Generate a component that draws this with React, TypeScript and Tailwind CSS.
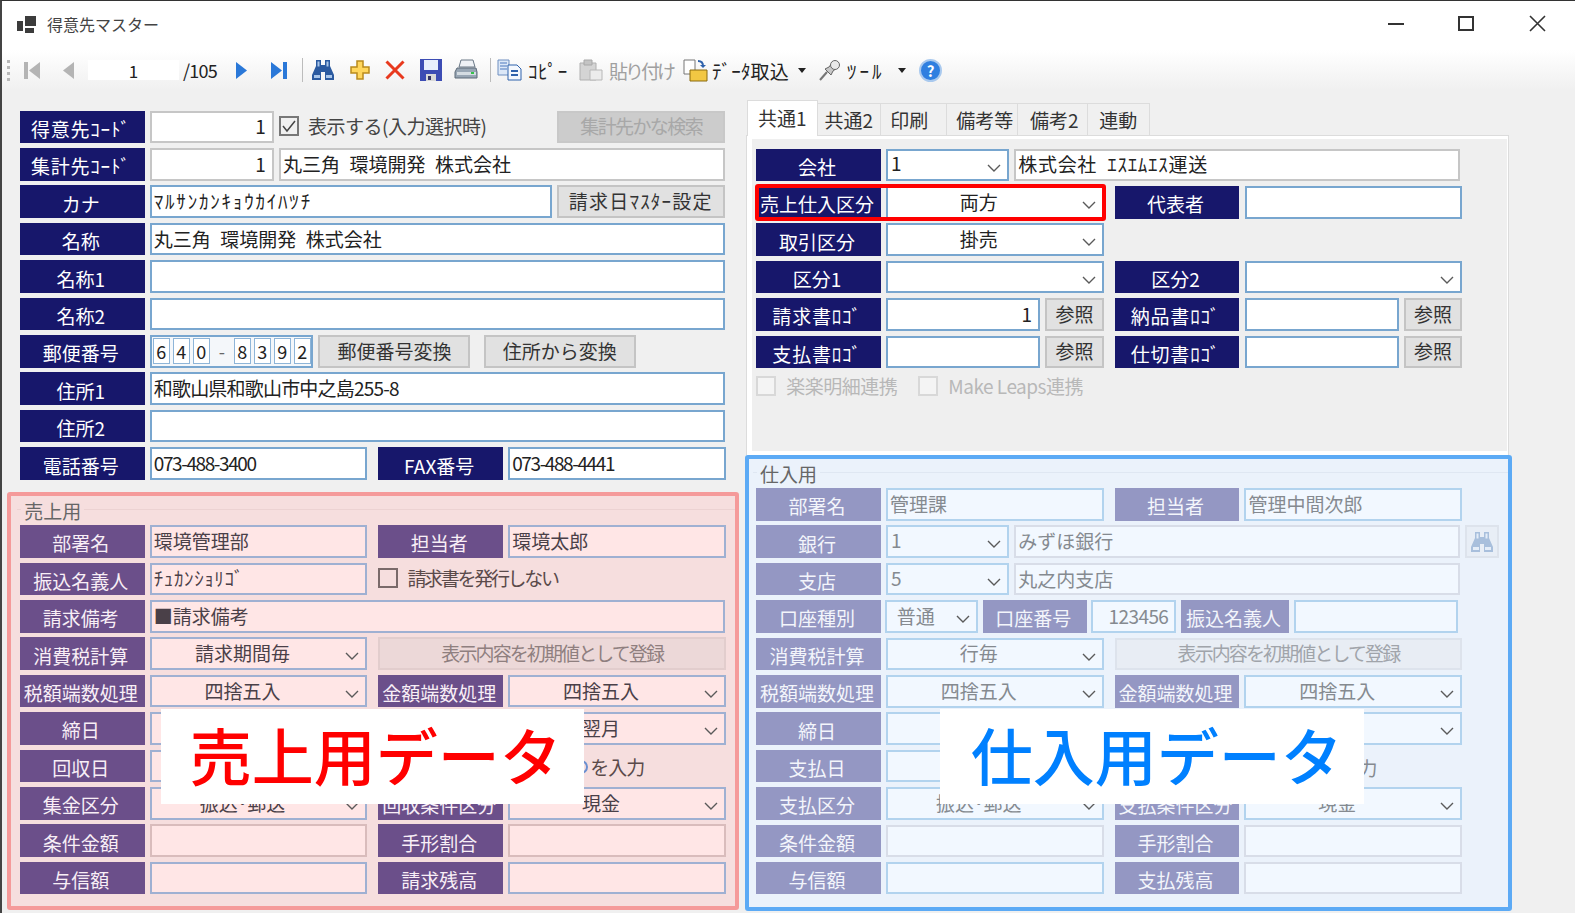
import React from "react";

type V = "main" | "sale" | "buy";

const labelCls: Record<V, string> = {
  main: "bg-[#17176b] text-white",
  sale: "bg-[#6b4f8a] text-[#f8eef6]",
  buy: "bg-[#9497c3] text-[#f3f5fb]",
};
const onCls: Record<V, string> = {
  main: "bg-white border-[#78a6cf] text-[#222222]",
  sale: "bg-[#ffe6e6] border-[#9fb0d2] text-[#4a4048]",
  buy: "bg-[#f2f8ff] border-[#b2d3ee] text-[#858a90]",
};
const offCls: Record<V, string> = {
  main: "bg-white border-[#c6c6c6] text-[#222222]",
  sale: "bg-[#ffe6e6] border-[#d9bcbc] text-[#4a4048]",
  buy: "bg-[#f2f8ff] border-[#d8dde8] text-[#858a90]",
};
const dimBtn: Record<V, string> = {
  main: "bg-[#cccccc] border-[#c8c8c8] text-[#a8a8a8]",
  sale: "bg-[#ecd8d8] border-[#e2cdcd] text-[#8f7f7f]",
  buy: "bg-[#e8edf4] border-[#dde3ec] text-[#a0a4aa]",
};

function Row({ children, className = "" }: { children?: React.ReactNode; className?: string }) {
  return <div className={`flex h-[32.6px] gap-[5.2px] ${className}`}>{children}</div>;
}
function L({ v = "main", t = "", className = "w-[124.6px]" }: { v?: V; t?: string; className?: string }) {
  const half = /[\uFF61-\uFF9F]/.test(t);
  return (
    <div className={`${className} ${labelCls[v]} ${half ? "tracking-[0.8px]" : ""} h-full shrink-0 flex items-center justify-center pt-[3px] pr-[3px] leading-none text-[19px] whitespace-nowrap overflow-hidden`}>
      {t}
    </div>
  );
}
function I({
  v = "main",
  t = "",
  w = "w-[217.6px]",
  off = false,
  right = false,
  track = "",
}: {
  v?: V;
  t?: string;
  w?: string;
  off?: boolean;
  right?: boolean;
  track?: string;
}) {
  return (
    <div
      className={`${w} ${off ? offCls[v] : onCls[v]} ${track} h-full shrink-0 border-2 flex items-center px-[2px] pb-[2px] leading-none text-[19px] whitespace-nowrap overflow-hidden ${right ? "justify-end pr-[6px]" : ""}`}
    >
      {t}
    </div>
  );
}
function Chevron() {
  return (
    <svg viewBox="0 0 14 8" className="absolute right-[6px] top-[13px] w-[14px] h-[8px]" fill="none" stroke="#5a5a5a" strokeWidth="1.4">
      <path d="M1 1l6 6 6-6" />
    </svg>
  );
}
function S({
  v = "main",
  t = "",
  w = "w-[217.6px]",
  left = false,
}: {
  v?: V;
  t?: string;
  w?: string;
  left?: boolean;
}) {
  return (
    <div
      className={`${w} ${onCls[v]} relative h-full shrink-0 border-2 flex items-center leading-none text-[19px] whitespace-nowrap overflow-hidden ${left ? "pl-[3px] pb-[4px]" : "justify-center pr-[32px] pb-[2px]"}`}
    >
      {t}
      <Chevron />
    </div>
  );
}
function B({ t, w, v, dim = false, extra = "" }: { t: string; w: string; v?: V; dim?: boolean; extra?: string }) {
  const c = dim && v ? dimBtn[v] : "bg-[#e1e1e1] border-[#c4c4c4] text-[#333333]";
  return (
    <div className={`${w} ${c} ${extra} h-full shrink-0 border-2 flex items-center justify-center pb-[2px] leading-none text-[19px] whitespace-nowrap`}>
      {t}
    </div>
  );
}
function Check({ on = false, cls = "border-[#777777]" }: { on?: boolean; cls?: string }) {
  return (
    <div className={`w-[20px] h-[20px] border-2 ${cls} shrink-0 flex items-center justify-center`}>
      {on && (
        <svg viewBox="0 0 16 16" className="w-[16px] h-[16px]" fill="none" stroke="#444444" strokeWidth="1.5">
          <path d="M2 8l4 5 8-10" />
        </svg>
      )}
    </div>
  );
}
function Gap() {
  return <div className="w-[0.7px] shrink-0" />;
}
function Legend({ t, cls, h }: { t: string; cls: string; h: string }) {
  return (
    <div className={`${h} relative flex items-start`}>
      <div className={`w-[4px] mt-[13px] h-[1px] ${cls}`} />
      <span className="text-[19px] leading-none px-[3px] mt-[5px] text-[#666666]">{t}</span>
      <div className={`flex-1 mt-[13px] h-[1px] ${cls}`} />
    </div>
  );
}
function Binoculars({ dim = false, className = "" }: { dim?: boolean; className?: string }) {
  const a = dim ? "#a8bfdc" : "#2b5aa0";
  const b = dim ? "#e4edf8" : "#a9c6ea";
  return (
    <svg viewBox="0 0 24 22" className={className}>
      <path d="M5 1h5v5h4V1h5v6l4 9v5h-9v-8h-4v8H1v-5l4-9z" fill={a} />
      <path d="M6.5 2.5h2v5h-2zM15.5 2.5h2v5h-2zM3 16h6v3H3zM15 16h6v3h-6z" fill={b} />
    </svg>
  );
}

function Toolbar() {
  return (
    <div className="h-[40px] bg-gradient-to-b from-white to-[#f0f0f0] flex items-center relative text-[#222222]">
      <div className="ml-[5px] flex flex-col gap-[3px]">
        <div className="w-[3px] h-[3px] bg-[#b8b8b8]" />
        <div className="w-[3px] h-[3px] bg-[#b8b8b8]" />
        <div className="w-[3px] h-[3px] bg-[#b8b8b8]" />
        <div className="w-[3px] h-[3px] bg-[#b8b8b8]" />
      </div>
      <svg viewBox="0 0 16 17" className="ml-[14px] w-[16px] h-[17px]" fill="#b4b4b4">
        <path d="M0 0h4v17H0zM16 0v17L5 8.5z" />
      </svg>
      <svg viewBox="0 0 11 17" className="ml-[23px] w-[11px] h-[17px]" fill="#b4b4b4">
        <path d="M11 0v17L0 8.5z" />
      </svg>
      <div className="ml-[14px] w-[91px] h-[20px] bg-white flex items-center justify-center text-[17px] leading-none">1</div>
      <span className="ml-[4px] w-[40px] text-[18px] leading-none tracking-[-0.8px]">/105</span>
      <svg viewBox="0 0 11 17" className="ml-[13px] w-[11px] h-[17px]" fill="#2a78d8">
        <path d="M0 0v17L11 8.5z" />
      </svg>
      <svg viewBox="0 0 16 17" className="ml-[24px] w-[16px] h-[17px]" fill="#2a78d8">
        <path d="M0 0v17L11 8.5zM12 0h4v17h-4z" />
      </svg>
      <div className="ml-[15px] w-[1px] h-[24px] bg-[#bcbcbc]" />
      <Binoculars className="ml-[8px] w-[24px] h-[22px]" />
      <svg viewBox="0 0 20 20" className="ml-[15px] w-[20px] h-[20px]">
        <path d="M7 1h6v6h6v6h-6v6H7v-6H1V7h6z" fill="#ffd65c" stroke="#b98a1c" strokeWidth="1.5" />
      </svg>
      <svg viewBox="0 0 20 20" className="ml-[15px] w-[20px] h-[20px]" stroke="#e8391e" strokeWidth="3" fill="none">
        <path d="M1.5 1.5l17 17M18.5 1.5l-17 17" />
      </svg>
      <svg viewBox="0 0 22 22" className="ml-[15px] w-[22px] h-[22px]">
        <path d="M0 0h22v22H0z" fill="#3c4cb4" />
        <path d="M4 1h14v10H4z" fill="#e8eefc" />
        <path d="M6 15h10v7H6z" fill="#d8d8d8" />
        <path d="M8 17h3v4H8z" fill="#333366" />
      </svg>
      <svg viewBox="0 0 24 22" className="ml-[12px] w-[24px] h-[22px]">
        <path d="M7 1h12l2 7H5z" fill="#eef1f5" stroke="#6a7886" />
        <path d="M3 9h19l1 4v6H1v-6z" fill="#98a6b4" stroke="#5c6a78" />
        <path d="M3 13h19v3H3z" fill="#d4dce2" />
        <path d="M17 13h3v2h-3z" fill="#35c24a" />
      </svg>
      <div className="ml-[12px] w-[1px] h-[24px] bg-[#bcbcbc]" />
      <svg viewBox="0 0 25 22" className="ml-[6px] w-[25px] h-[22px]">
        <path d="M1 1h11v15H1z" fill="#dce8f8" stroke="#6e8fc0" />
        <path d="M3 4h7M3 7h7M3 10h7" stroke="#4c78bd" />
        <path d="M11 6h9l4 4v11H11z" fill="#f4f8fe" stroke="#2f62ac" />
        <path d="M14 11h7v2h-7zM14 15h7v2h-7z" fill="#2f62ac" />
      </svg>
      <span className="ml-[6px] w-[38px] text-[19px] leading-none tracking-[0.6px] whitespace-nowrap">ｺﾋﾟｰ</span>
      <svg viewBox="0 0 25 22" className="ml-[12px] w-[25px] h-[22px]">
        <path d="M2 4h16v17H2z" fill="#d4d4d4" stroke="#b0b0b0" />
        <path d="M6 1h8v5H6z" fill="#c4c4c4" stroke="#a8a8a8" />
        <path d="M12 11h12v10H12z" fill="#ececec" stroke="#b8b8b8" />
      </svg>
      <span className="ml-[6px] w-[62px] text-[19px] leading-none text-[#a0a0a0] tracking-[-3px] whitespace-nowrap">貼り付け</span>
      <svg viewBox="0 0 25 23" className="ml-[12px] w-[25px] h-[23px]">
        <path d="M1 1h11v14H1z" fill="#ffffff" stroke="#777777" />
        <path d="M15 2c4 0 5 2 5 5" fill="none" stroke="#2f62ac" strokeWidth="2" />
        <path d="M17 6l3 3 3-3z" fill="#2f62ac" />
        <path d="M7 11h17v11H7z" fill="#f2c743" stroke="#8a6a10" />
      </svg>
      <span className="ml-[4px] w-[79px] text-[19px] leading-none tracking-[0.2px] whitespace-nowrap">ﾃﾞｰﾀ取込</span>
      <svg viewBox="0 0 8 5" className="ml-[7px] w-[8px] h-[5px]" fill="#222222">
        <path d="M0 0h8L4 5z" />
      </svg>
      <svg viewBox="0 0 22 22" className="ml-[13px] w-[22px] h-[22px]">
        <path d="M1 21l7-8" stroke="#777777" strokeWidth="2" />
        <path d="M6 10l6 6 2-4 4-3-5-5-3 4z" fill="#c8c8c8" stroke="#666666" />
        <circle cx="16" cy="6" r="4.5" fill="#e8e8e8" stroke="#666666" />
      </svg>
      <span className="ml-[6px] w-[42px] text-[19px] leading-none tracking-[3px] whitespace-nowrap">ﾂｰﾙ</span>
      <svg viewBox="0 0 8 5" className="ml-[9px] w-[8px] h-[5px]" fill="#222222">
        <path d="M0 0h8L4 5z" />
      </svg>
      <div className="ml-[13px] w-[23px] h-[23px] rounded-full bg-[#2f7fe0] border-2 border-[#a9c9ee] flex items-center justify-center text-white font-bold text-[15px] leading-none">?</div>
    </div>
  );
}

function TitleBar() {
  return (
    <div className="h-[49px] bg-white flex items-center relative pb-[4px]">
      <div className="ml-[15px] w-[20px] h-[18px] flex gap-[2px] items-end">
        <div className="w-[6px] h-[10px] bg-[#3c3c3c] mb-[2px]" />
        <div className="flex flex-col gap-[2px]">
          <div className="w-[11px] h-[10px] bg-[#3c3c3c]" />
          <div className="w-[9px] h-[5px] bg-[#3c3c3c]" />
        </div>
      </div>
      <span className="ml-[10px] text-[16px] leading-none text-[#444444]">得意先マスター</span>
      <div className="ml-auto flex items-center mr-[29px]">
        <div className="w-[16px] h-[2px] bg-[#333333]" />
        <div className="ml-[54px] w-[16px] h-[15px] border-2 border-[#333333]" />
        <svg viewBox="0 0 17 17" className="ml-[55px] w-[17px] h-[17px]" stroke="#333333" strokeWidth="1.6" fill="none">
          <path d="M1 1l15 15M16 1L1 16" />
        </svg>
      </div>
    </div>
  );
}

function LeftTop() {
  return (
    <div className="ml-[12.7px] flex flex-col gap-[4.8px]">
      <Row>
        <L t="得意先ｺｰﾄﾞ" />
        <I t="1" w="w-[124px]" off right />
        <div className="flex items-center gap-[9px] w-[273px] text-[#444444] text-[19px] leading-none tracking-[-0.5px] whitespace-nowrap pb-[2px]">
          <Check on />
          <span>表示する(入力選択時)</span>
        </div>
        <B t="集計先かな検索" w="w-[168px]" v="main" dim extra="tracking-[-1.6px]" />
      </Row>
      <Row>
        <L t="集計先ｺｰﾄﾞ" />
        <I t="1" w="w-[124px]" off right />
        <I t={"丸三角\u2002環境開発\u2002株式会社"} w="w-[446px]" off />
      </Row>
      <Row>
        <L t="カナ" />
        <I t="ﾏﾙｻﾝｶﾝｷｮｳｶｲﾊﾂﾁ" w="w-[402.5px]" track="tracking-[1.8px]" />
        <B t="請求日ﾏｽﾀｰ設定" w="w-[168px]" extra="-ml-[0.7px] tracking-[1.2px]" />
      </Row>
      <Row>
        <L t="名称" />
        <I t={"丸三角\u2002環境開発\u2002株式会社"} w="w-[575px]" />
      </Row>
      <Row>
        <L t="名称1" />
        <I w="w-[575px]" />
      </Row>
      <Row>
        <L t="名称2" />
        <I w="w-[575px]" />
      </Row>
      <Row>
        <L t="郵便番号" />
        <div className="w-[163.5px] h-full shrink-0 border-2 border-[#78a6cf] bg-[#f4f7fa] flex items-center pl-[1px] gap-[3px] text-[18px] leading-none text-[#222222]">
          {["6", "4", "0"].map((d, i) => (
            <div key={i} className="w-[17px] h-[26px] border border-[#8eb5d8] bg-white flex items-center justify-center">{d}</div>
          ))}
          <div className="w-[18px] text-center text-[#666666]">-</div>
          {["8", "3", "9", "2"].map((d, i) => (
            <div key={i} className="w-[17px] h-[26px] border border-[#8eb5d8] bg-white flex items-center justify-center">{d}</div>
          ))}
        </div>
        <B t="郵便番号変換" w="w-[152px]" />
        <B t="住所から変換" w="w-[152px]" extra="ml-[8px]" />
      </Row>
      <Row>
        <L t="住所1" />
        <I t="和歌山県和歌山市中之島255-8" w="w-[575px]" track="tracking-[-0.8px]" />
      </Row>
      <Row>
        <L t="住所2" />
        <I w="w-[575px]" />
      </Row>
      <Row>
        <L t="電話番号" />
        <I t="073-488-3400" track="tracking-[-1.4px]" />
        <Gap />
        <L t="FAX番号" />
        <I t="073-488-4441" track="tracking-[-1.4px]" />
      </Row>
    </div>
  );
}

function SalePanel() {
  const v: V = "sale";
  return (
    <div className="relative mt-[12.7px] w-[731.7px] h-[418px] border-[4.5px] border-[#f59a9a] bg-[#f6dede] rounded-[3px] pl-[8.7px]">
      <div className="-ml-[8.7px]">
        <Legend t="売上用" cls="bg-[#ecd2d2]" h="h-[28.7px] pl-[6px]" />
      </div>
      <div className="flex flex-col gap-[4.8px]">
        <Row>
          <L v={v} t="部署名" />
          <I v={v} t="環境管理部" />
          <Gap />
          <L v={v} t="担当者" />
          <I v={v} t="環境太郎" />
        </Row>
        <Row>
          <L v={v} t="振込名義人" />
          <I v={v} t="ﾁｭｶﾝｼｮﾘｺﾞ" track="tracking-[0.6px]" />
          <Gap />
          <div className="flex items-center gap-[9px] text-[19px] leading-none text-[#5a4a4a] tracking-[-2.3px] whitespace-nowrap pb-[2px]">
            <Check cls="border-[#7a6a6a]" />
            <span>請求書を発行しない</span>
          </div>
        </Row>
        <Row>
          <L v={v} t="請求備考" />
          <I v={v} t="■請求備考" w="w-[575px]" />
        </Row>
        <Row>
          <L v={v} t="消費税計算" />
          <S v={v} t="請求期間毎" />
          <Gap />
          <B t="表示内容を初期値として登録" w="w-[347.6px]" v={v} dim extra="tracking-[-1.9px]" />
        </Row>
        <Row>
          <L v={v} t="税額端数処理" />
          <S v={v} t="四捨五入" />
          <Gap />
          <L v={v} t="金額端数処理" />
          <S v={v} t="四捨五入" />
        </Row>
        <Row>
          <L v={v} t="締日" />
          <I v={v} />
          <Gap />
          <L v={v} />
          <S v={v} t="翌月" />
        </Row>
        <Row>
          <L v={v} t="回収日" />
          <I v={v} />
          <Gap />
          <L v={v} />
          <div className="flex items-center ml-[66px] pt-[2px] text-[19px] leading-none text-[#5a4a4a] tracking-[-1px] whitespace-nowrap">
            <div className="w-[14px] h-[14px] rounded-full border-2 border-[#6a8fd0] mr-[2px]" />
            を入力
          </div>
        </Row>
        <Row>
          <L v={v} t="集金区分" />
          <S v={v} t="振込･郵送" />
          <Gap />
          <L v={v} t="回収条件区分" />
          <S v={v} t="現金" />
        </Row>
        <Row>
          <L v={v} t="条件金額" />
          <I v={v} off />
          <Gap />
          <L v={v} t="手形割合" />
          <I v={v} off />
        </Row>
        <Row>
          <L v={v} t="与信額" />
          <I v={v} />
          <Gap />
          <L v={v} t="請求残高" />
          <I v={v} />
        </Row>
      </div>
      <div className="absolute left-[149.6px] top-[212.8px] w-[423.6px] h-[95px] bg-white flex items-center justify-center pl-[6px] pb-[5px] text-[62px] font-medium leading-none text-[#ff0000] whitespace-nowrap">
        売上用データ
      </div>
    </div>
  );
}

function TabsTop() {
  const base = "h-[32.6px] bg-[#f0f0f0] border border-l-0 border-b-0 border-[#dcdcdc] flex items-center justify-center shrink-0";
  return (
    <div className="flex items-end h-[35.3px] ml-[1.7px] text-[19px] leading-none text-[#333333]">
      <div className="w-[71px] h-[36px] -mb-[1px] z-10 bg-white border border-b-0 border-[#dcdcdc] flex items-center justify-center pb-[3px] shrink-0">共通1</div>
      <div className={`w-[63px] ${base}`}>共通2</div>
      <div className={`w-[66px] pr-[8px] ${base}`}>印刷</div>
      <div className={`w-[71px] pl-[6px] ${base}`}>備考等</div>
      <div className={`w-[70px] pl-[4px] ${base}`}>備考2</div>
      <div className={`w-[62px] ${base}`}>連動</div>
    </div>
  );
}

function TabPanel() {
  return (
    <div className="ml-[1px] w-[763px] h-[319.4px] bg-white border border-[#dcdcdc] border-b-0 pl-[5px] pr-[1px] pt-[3px] pb-[4px]">
      <div className="h-full bg-[#efefef] pl-[4.3px] pt-[9.3px] flex flex-col gap-[4.8px]">
        <Row>
          <L t="会社" />
          <S t="1" w="w-[123px]" left />
          <I t={"株式会社\u2002ｴｽｴﾑｴｽ運送"} w="w-[446px]" off track="tracking-[0.7px]" />
        </Row>
        <Row>
          <div className="relative flex h-full gap-[5.2px]">
            <L t="売上仕入区分" />
            <S t="両方" />
            <div className="absolute -left-[1.3px] -right-[2.7px] -top-[2px] -bottom-[2px] border-[4px] border-[#ff0000] rounded-[3px]" />
          </div>
          <Gap />
          <L t="代表者" />
          <I />
        </Row>
        <Row>
          <L t="取引区分" />
          <S t="掛売" />
        </Row>
        <Row>
          <L t="区分1" />
          <S />
          <Gap />
          <L t="区分2" />
          <S />
        </Row>
        <Row>
          <L t="請求書ﾛｺﾞ" />
          <I t="1" w="w-[154px]" right />
          <B t="参照" w="w-[58.4px]" />
          <Gap />
          <L t="納品書ﾛｺﾞ" />
          <I w="w-[154px]" />
          <B t="参照" w="w-[58.4px]" />
        </Row>
        <Row>
          <L t="支払書ﾛｺﾞ" />
          <I w="w-[154px]" />
          <B t="参照" w="w-[58.4px]" />
          <Gap />
          <L t="仕切書ﾛｺﾞ" />
          <I w="w-[154px]" />
          <B t="参照" w="w-[58.4px]" />
        </Row>
        <div className="flex items-center h-[26px] text-[19px] leading-none text-[#b8b8b8] whitespace-nowrap tracking-[-0.5px]">
          <Check cls="border-[#d8d8d8] bg-[#f4f4f4]" />
          <span className="ml-[10px]">楽楽明細連携</span>
          <div className="ml-[21px]"><Check cls="border-[#d8d8d8] bg-[#f4f4f4]" /></div>
          <span className="ml-[10px]">Make Leaps連携</span>
        </div>
      </div>
    </div>
  );
}

function BuyPanel() {
  const v: V = "buy";
  return (
    <div className="relative w-[767px] h-[456px] border-[4.5px] border-[#5caaf5] bg-[#ebf2fb] rounded-[3px] pl-[7.2px]">
      <div className="-ml-[7.2px]">
        <Legend t="仕入用" cls="bg-[#dfe7f2]" h="h-[29.3px] pl-[4px]" />
      </div>
      <div className="flex flex-col gap-[4.8px]">
        <Row>
          <L v={v} t="部署名" />
          <I v={v} t="管理課" />
          <Gap />
          <L v={v} t="担当者" />
          <I v={v} t="管理中間次郎" />
        </Row>
        <Row>
          <L v={v} t="銀行" />
          <S v={v} t="1" w="w-[123px]" left />
          <I v={v} t="みずほ銀行" w="w-[446px]" off />
          <div className="w-[34px] h-full bg-[#e8eef6] border-2 border-[#dde3ec] flex items-center justify-center">
            <Binoculars dim className="w-[24px] h-[22px]" />
          </div>
        </Row>
        <Row>
          <L v={v} t="支店" />
          <S v={v} t="5" w="w-[123px]" left />
          <I v={v} t="丸之内支店" w="w-[446px]" off />
        </Row>
        <Row className="!gap-[4.5px]">
          <L v={v} t="口座種別" />
          <S v={v} t="普通" w="w-[93px]" />
          <L v={v} t="口座番号" className="w-[104px]" />
          <I v={v} t="123456" w="w-[85px]" right track="tracking-[-0.6px]" />
          <L v={v} t="振込名義人" className="w-[108.7px]" />
          <I v={v} w="w-[164.5px]" />
        </Row>
        <Row>
          <L v={v} t="消費税計算" />
          <S v={v} t="行毎" />
          <Gap />
          <B t="表示内容を初期値として登録" w="w-[347.6px]" v={v} dim extra="tracking-[-1.9px]" />
        </Row>
        <Row>
          <L v={v} t="税額端数処理" />
          <S v={v} t="四捨五入" />
          <Gap />
          <L v={v} t="金額端数処理" />
          <S v={v} t="四捨五入" />
        </Row>
        <Row>
          <L v={v} t="締日" />
          <I v={v} />
          <Gap />
          <L v={v} />
          <S v={v} />
        </Row>
        <Row>
          <L v={v} t="支払日" />
          <I v={v} />
          <Gap />
          <L v={v} />
          <div className="flex items-center ml-[78px] pt-[2px] text-[19px] leading-none text-[#858a90] tracking-[-1px] whitespace-nowrap">を入力</div>
        </Row>
        <Row>
          <L v={v} t="支払区分" />
          <S v={v} t="振込･郵送" />
          <Gap />
          <L v={v} t="支払条件区分" />
          <S v={v} t="現金" />
        </Row>
        <Row>
          <L v={v} t="条件金額" />
          <I v={v} off />
          <Gap />
          <L v={v} t="手形割合" />
          <I v={v} off />
        </Row>
        <Row>
          <L v={v} t="与信額" />
          <I v={v} />
          <Gap />
          <L v={v} t="支払残高" />
          <I v={v} off />
        </Row>
      </div>
      <div className="absolute left-[191px] top-[250.8px] w-[423.5px] h-[95px] bg-white flex items-center justify-center pl-[10px] pb-[5px] text-[62px] font-medium leading-none text-[#0080ff] whitespace-nowrap">
        仕入用データ
      </div>
    </div>
  );
}

export default function App() {
  return (
    <div className="w-[1575px] h-[913px] overflow-hidden bg-[#f0f0f0] border-t border-l-2 border-t-[#333333] border-l-[#444444] font-['Noto_Sans_CJK_JP','Noto_Sans',sans-serif]">
      <TitleBar />
      <Toolbar />
      <div className="flex">
        <div className="w-[743px] shrink-0 pl-[5.3px] pt-[20.7px]">
          <LeftTop />
          <SalePanel />
        </div>
        <div className="flex-1 pt-[10px]">
          <TabsTop />
          <TabPanel />
          <BuyPanel />
        </div>
      </div>
    </div>
  );
}
